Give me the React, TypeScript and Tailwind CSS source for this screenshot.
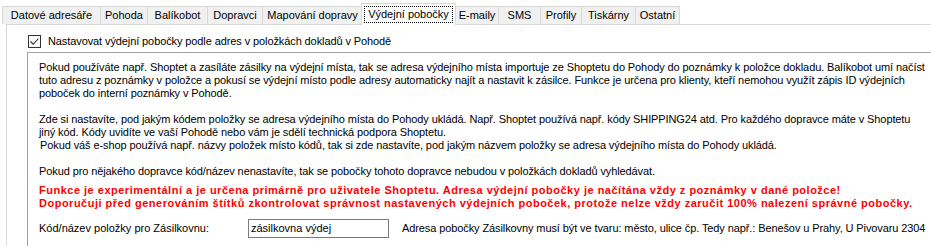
const tabs = [
  { label: "Datové adresáře", w: "w-[98px]" },
  { label: "Pohoda", w: "w-[47px]" },
  { label: "Balíkobot", w: "w-[60px]" },
  { label: "Dopravci", w: "w-[55px]" },
  { label: "Mapování dopravy", w: "w-[100px]" },
  { label: "Výdejní pobočky", w: "w-[95px]", active: true },
  { label: "E-maily", w: "w-[43px]" },
  { label: "SMS", w: "w-[42px]" },
  { label: "Profily", w: "w-[41px]" },
  { label: "Tiskárny", w: "w-[54px]" },
  { label: "Ostatní", w: "w-[45px]" },
];

function Tab({ label, w, active }: { label: string; w: string; active?: boolean }) {
  if (active) {
    return (
      <div
        className={`${w} h-[22px] -mb-px mx-[-1px] z-10 flex items-center justify-center border border-b-0 border-[#d9d9d9] bg-white`}
      >
        <span className="px-[3px] leading-[15px] outline outline-1 outline-dotted outline-black">{label}</span>
      </div>
    );
  }
  return (
    <div
      className={`${w} h-[18px] flex items-center justify-center border border-b-0 border-r-0 last:border-r border-[#d9d9d9] bg-[#f0f0f0]`}
    >
      {label}
    </div>
  );
}

function Checkbox() {
  return (
    <div className="w-[13px] h-[13px] border border-[#333333] bg-white flex items-center justify-center">
      <svg width="11" height="11" viewBox="0 0 11 11">
        <path d="M1.5 5.5 L4.2 8.2 L9.5 2.5" fill="none" stroke="#333333" strokeWidth="1.1" />
      </svg>
    </div>
  );
}

const body = "whitespace-nowrap h-[13px] leading-[13px] tracking-[-0.1px]";

export default function App() {
  return (
    <div className="w-[931px] h-[246px] overflow-hidden bg-white text-[11px] text-black font-['Liberation_Sans',Arial,sans-serif]">
      <div className="flex items-end h-[24px] pl-[2px]">
        {tabs.map((t) => (
          <Tab key={t.label} {...t} />
        ))}
      </div>
      <div className="ml-[6px] h-[222px] border-l border-t border-[#d9d9d9] pl-[20px] pt-[9px]">
        <div className="flex items-center gap-[7px] h-[14px] ml-[1px]">
          <Checkbox />
          <span className="tracking-[-0.1px]">Nastavovat výdejní pobočky podle adres v položkách dokladů v Pohodě</span>
        </div>
        <div className="mt-[4px] h-[200px] border-l border-t border-[#a0a0a0] pl-[11px] pt-[8px]">
          <div className={body}>
            Pokud používáte např. Shoptet a zasíláte zásilky na výdejní místa, tak se adresa výdejního místa importuje ze Shoptetu do Pohody do poznámky k položce dokladu. Balíkobot umí načíst
          </div>
          <div className={body}>
            tuto adresu z poznámky v položce a pokusí se výdejní místo podle adresy automaticky najít a nastavit k zásilce. Funkce je určena pro klienty, kteří nemohou využít zápis ID výdejních
          </div>
          <div className={body}>poboček do interní poznámky v Pohodě.</div>
          <div className="h-[13px]" />
          <div className={body}>
            Zde si nastavíte, pod jakým kódem položky se adresa výdejního místa do Pohody ukládá. Např. Shoptet používá např. kódy SHIPPING24 atd. Pro každého dopravce máte v Shoptetu
          </div>
          <div className={body}>jiný kód. Kódy uvidíte ve vaší Pohodě nebo vám je sdělí technická podpora Shoptetu.</div>
          <div className={`${body} pl-[1px]`}>
            Pokud váš e-shop používá např. názvy položek místo kódů, tak si zde nastavíte, pod jakým názvem položky se adresa výdejního místa do Pohody ukládá.
          </div>
          <div className="h-[13px]" />
          <div className={body}>
            Pokud pro nějakého dopravce kód/název nenastavíte, tak se pobočky tohoto dopravce nebudou v položkách dokladů vyhledávat.
          </div>
          <div className="mt-[6px] font-bold text-[#ff0000] whitespace-nowrap leading-[13px] tracking-[0.5px]">
            <div>Funkce je experimentální a je určena primárně pro uživatele Shoptetu. Adresa výdejní pobočky je načítána vždy z poznámky v dané položce!</div>
            <div>Doporučuji před generováním štítků zkontrolovat správnost nastavených výdejních poboček, protože nelze vždy zaručit 100% nalezení správné pobočky.</div>
          </div>
          <div className="mt-[9px] flex items-center h-[19px] whitespace-nowrap">
            <div className="w-[209px]">Kód/název položky pro Zásilkovnu:</div>
            <div className="w-[141px] h-[19px] border border-[#7a7a7a] bg-white pl-[2px] leading-[17px]">zásilkovna výdej</div>
            <div className="ml-[13px] tracking-[-0.1px]">
              Adresa pobočky Zásilkovny musí být ve tvaru: město, ulice čp. Tedy např.: Benešov u Prahy, U Pivovaru 2304
            </div>
          </div>
        </div>
      </div>
    </div>
  );
}
